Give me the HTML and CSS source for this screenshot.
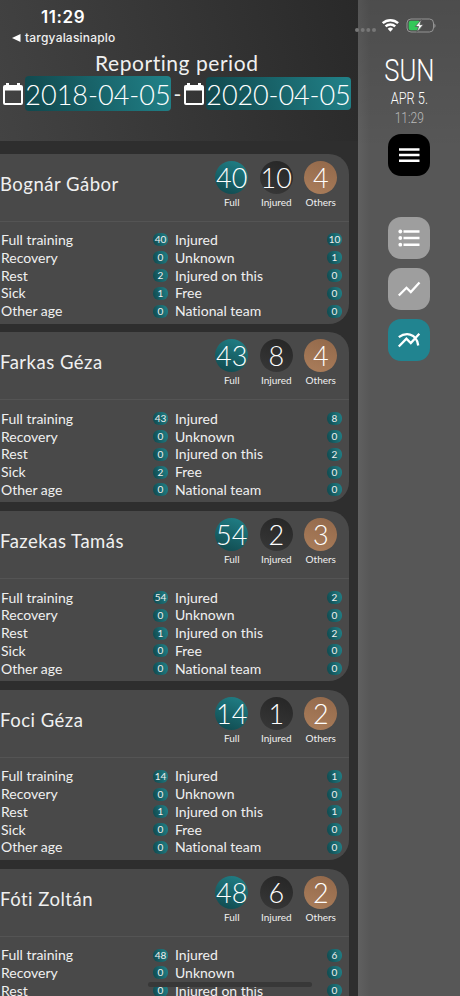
FILE: index.html
```html
<!DOCTYPE html>
<html lang="en">
<head>
  <meta charset="utf-8">
  <title>Reporting period</title>
  <link rel="stylesheet" href="styles.css">
</head>
<body>
  <div class="app">
    <main class="content">
      <header class="header">
        <div class="clock">11:29</div>
        <div class="back">
          <svg width="9" height="8" viewBox="0 0 9 8"><path d="M8.5 0v8L0 4z" fill="#fff"/></svg>
          <span>targyalasinaplo</span>
        </div>
        <h1 class="title">Reporting period</h1>
        <div class="period">
          <svg class="calendar" viewBox="0 0 20 22"><path fill="#fff" fill-rule="evenodd" d="M3 0h3v2h8V0h3v2h1a2 2 0 0 1 2 2v16a2 2 0 0 1-2 2H2a2 2 0 0 1-2-2V4a2 2 0 0 1 2-2h1zM2 7.500v12.500h16V7.500z"/></svg>
          <span class="date">2018-04-05</span>
          <span class="dash">-</span>
          <svg class="calendar" viewBox="0 0 20 22"><path fill="#fff" fill-rule="evenodd" d="M3 0h3v2h8V0h3v2h1a2 2 0 0 1 2 2v16a2 2 0 0 1-2 2H2a2 2 0 0 1-2-2V4a2 2 0 0 1 2-2h1zM2 7.500v12.500h16V7.500z"/></svg>
          <span class="date date-end">2020-04-05</span>
        </div>
      </header>
      <div id="players" class="players"></div>
    </main>

    <aside class="sidebar">
      <div class="day">SUN</div>
      <div class="month">APR 5.</div>
      <div class="time">11:29</div>
      <button class="tool menu">
        <svg width="42" height="42" viewBox="0 0 42 42"><path d="M11 15.500h20.500M11 21h20.500M11 26.700h20.500" stroke="#fff" stroke-width="2.400"/></svg>
      </button>
      <button class="tool">
        <svg width="42" height="42" viewBox="0 0 42 42"><path d="M15.500 14.500h16M15.500 21h16M15.500 27.700h16" stroke="#fff" stroke-width="2.400"/><g fill="#fff"><circle cx="12.300" cy="14.500" r="1.900"/><circle cx="12.300" cy="21" r="1.900"/><circle cx="12.300" cy="27.700" r="1.900"/></g></svg>
      </button>
      <button class="tool">
        <svg width="42" height="42" viewBox="0 0 42 42"><path d="M10.800 27.500l7.700-7.700 4.300 4.200 8.700-9.500" fill="none" stroke="#fff" stroke-width="2.300"/></svg>
      </button>
      <button class="tool active">
        <svg width="42" height="42" viewBox="0 0 42 42"><path d="M10.800 27.500l7.600-7.800 4.400 4.300 8.500-9.300M10.800 18.200c6-4.500 17.600-5.300 19.400 8.300" fill="none" stroke="#fff" stroke-width="2.300"/></svg>
      </button>
    </aside>
  </div>

  <div class="status">
    <svg width="82" height="18" viewBox="0 0 82 18">
      <g fill="#777"><circle cx="3" cy="13" r="2"/><circle cx="8.700" cy="13" r="2"/><circle cx="14.300" cy="13" r="2"/><circle cx="20" cy="13" r="2"/></g>
      <g fill="none" stroke="#fff" stroke-width="2.500">
        <path d="M28.700 6.200a11.300 11.300 0 0 1 15.400 0"/>
        <path d="M31.600 9.400a7 7 0 0 1 9.600 0"/>
      </g>
      <path d="M33.700 11.700a4 4 0 0 1 5.400 0L36.400 14.700z" fill="#fff"/>
      <rect x="53" y="2" width="26.500" height="13" rx="4" fill="none" stroke="#949494"/>
      <path d="M80.300 6.500c1.700 1 1.700 3.500 0 4.500z" fill="#949494"/>
      <rect x="54.700" y="3.700" width="11.600" height="9.600" rx="2" fill="#34c759"/>
      <path d="M67.500 2.500l-6.200 7h3.300l-1.800 5.700 6.600-7.500h-3.500z" fill="#fff" stroke="#505050" stroke-width=".8"/>
    </svg>
  </div>
  <div class="home-bar"></div>

  <script>
    var leftLabels = ['Full training', 'Recovery', 'Rest', 'Sick', 'Other age'];
    var rightLabels = ['Injured', 'Unknown', 'Injured on this', 'Free', 'National team'];

    var players = [
      { name: 'Bognár Gábor', totals: [40, 10, 4], left: [40, 0, 2, 1, 0], right: [10, 1, 0, 0, 0] },
      { name: 'Farkas Géza', totals: [43, 8, 4], left: [43, 0, 0, 2, 0], right: [8, 0, 2, 0, 0] },
      { name: 'Fazekas Tamás', totals: [54, 2, 3], left: [54, 0, 1, 0, 0], right: [2, 0, 2, 0, 0] },
      { name: 'Foci Géza', totals: [14, 1, 2], left: [14, 0, 1, 0, 0], right: [1, 0, 1, 0, 0] },
      // last card runs off the bottom of the screen
      { name: 'Fóti Zoltán', totals: [48, 6, 2], left: [48, 0, 0], right: [6, 0, 0] }
    ];

    function total(value, label, type) {
      return '<div class="total"><div class="circle ' + type + '">' + value + '</div>' +
        '<div class="total-label">' + label + '</div></div>';
    }

    function column(labels, values) {
      return '<div class="column">' + values.map(function(value, i) {
        return '<div class="row"><span>' + labels[i] + '</span><span class="badge">' + value + '</span></div>';
      }).join('') + '</div>';
    }

    document.getElementById('players').innerHTML = players.map(function(player) {
      return '<section class="card"><div class="card-head">' +
        '<h2 class="name">' + player.name + '</h2>' +
        '<div class="totals">' +
        total(player.totals[0], 'Full', 'full') +
        total(player.totals[1], 'Injured', 'injured') +
        total(player.totals[2], 'Others', 'others') +
        '</div></div><div class="details">' +
        column(leftLabels, player.left) +
        column(rightLabels, player.right) +
        '</div></section>';
    }).join('');
  </script>
</body>
</html>
```
FILE: styles.css
```css
* {
  box-sizing: border-box;
}

body {
  margin: 0;
  height: 996px;
  overflow: hidden;
  background: #2e2e2e;
  color: #f0f0f0;
  font-family: Lato, sans-serif;
  font-variant-ligatures: none;
}

.app {
  display: flex;
  height: 996px;
  overflow: hidden;
}

.content {
  width: 358px;
  flex: none;
}

.header {
  height: 141px;
  padding-top: 7px;
  background: linear-gradient(75deg, #434343, #292929);
}

.clock {
  padding-left: 41px;
  color: #fff;
  font: 600 17px/21px Inter, sans-serif;
  letter-spacing: 0.6px;
}

.back {
  display: flex;
  align-items: center;
  gap: 4px;
  height: 20px;
  padding-left: 12px;
  font: 500 12px/20px Inter, sans-serif;
  letter-spacing: 0.2px;
}

.title {
  margin: 2px 0 0;
  padding-left: 95px;
  font-size: 21px;
  font-weight: 400;
  line-height: 26px;
  letter-spacing: 0.55px;
  white-space: nowrap;
}

.period {
  display: flex;
  align-items: center;
  height: 35px;
  padding-left: 3px;
}

.calendar {
  width: 20px;
  height: 22px;
  flex: none;
}

.date {
  width: 146px;
  height: 35px;
  flex: none;
  margin-left: 2px;
  border-radius: 4px;
  background: linear-gradient(75deg, #10474c, #218289);
  color: #fff;
  font-size: 27px;
  font-weight: 300;
  line-height: 37px;
  text-align: center;
  white-space: nowrap;
}

.date-end {
  width: 145px;
  height: 33px;
  letter-spacing: -0.1px;
  line-height: 35px;
}

.dash {
  width: 13px;
  text-align: center;
  font-size: 21px;
}

.players {
  display: flex;
  flex-direction: column;
  gap: 8.8px;
  padding-top: 12.500px;
}

.card {
  width: 349px;
  height: 170px;
  flex: none;
  border-radius: 0 20px 20px 0;
  background: #494949;
}

.card-head {
  display: flex;
  justify-content: space-between;
  height: 68px;
  border-bottom: 1px solid #545454;
}

.name {
  margin: 0;
  font-size: 18.5px;
  font-weight: 400;
  line-height: 61px;
  letter-spacing: 0.5px;
}

.totals {
  display: flex;
  padding: 7px 6px 0 0;
}

.total {
  width: 44.5px;
}

.circle {
  width: 33px;
  height: 33px;
  margin: 0 auto;
  border-radius: 50%;
  color: #fff;
  font-size: 27px;
  font-weight: 300;
  line-height: 33px;
  text-align: center;
}

.full {
  background: linear-gradient(20deg, #10474c, #218289);
}

.injured {
  background: linear-gradient(20deg, #383838, #252525);
}

.others {
  background: linear-gradient(20deg, #ab7e5b, #92684a);
}

.total-label {
  margin-top: 1px;
  font-size: 10px;
  line-height: 14px;
  text-align: center;
}

.details {
  display: flex;
  gap: 7px;
  padding: 9.500px 7px 0 1px;
}

.column {
  width: 167px;
}

.row {
  display: flex;
  align-items: center;
  justify-content: space-between;
  height: 17.800px;
  font-size: 14px;
  line-height: 18px;
}

.badge {
  width: 15px;
  height: 13px;
  border-radius: 6px;
  background: linear-gradient(75deg, #10474c, #218289);
  font-size: 10px;
  line-height: 13px;
  text-align: center;
}

.sidebar {
  display: flex;
  flex-direction: column;
  align-items: center;
  width: 102px;
  padding-top: 52px;
  background: linear-gradient(rgba(0, 0, 0, 0.12), transparent 150px), linear-gradient(to right, #606060, #575757 12px);
}

.day,
.month,
.time {
  color: #fff;
  font-family: Roboto, sans-serif;
  font-weight: 300;
  white-space: nowrap;
  transform: scaleX(0.8);
}

.day {
  font-size: 32px;
  line-height: 37px;
}

.month {
  font-size: 16px;
  line-height: 20px;
}

.time {
  color: #bababa;
  font-size: 15px;
  line-height: 19px;
}

.tool {
  width: 42px;
  height: 42px;
  flex: none;
  margin-bottom: 9px;
  padding: 0;
  border: none;
  border-radius: 13px;
  background: #9e9e9e;
}

.tool svg {
  display: block;
}

.menu {
  margin: 6px 0 41px;
  background: #000;
}

.active {
  background: #218490;
}

.status {
  position: absolute;
  top: 17px;
  left: 354px;
}

.home-bar {
  position: absolute;
  bottom: 9px;
  left: 148px;
  width: 164px;
  height: 5px;
  border-radius: 3px;
  background: #383838;
}
```
